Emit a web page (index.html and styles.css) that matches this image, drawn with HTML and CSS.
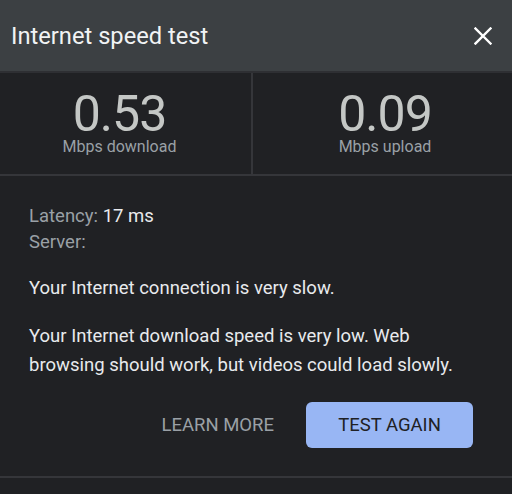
FILE: index.html
```html
<!DOCTYPE html>
<html lang="en">
<head>
<meta charset="utf-8">
<title>Internet speed test</title>
<link rel="stylesheet" href="styles.css">
</head>
<body>
<div class="panel">
  <header class="header">
    <h1 class="title">Internet speed test</h1>
    <button class="close" aria-label="Close">
      <svg width="18" height="18" viewBox="0 0 18 18"><path d="M1.5 1.5 L16.5 16.5 M16.5 1.5 L1.5 16.5" stroke="#ffffff" stroke-width="2.4" stroke-linecap="square" fill="none"/></svg>
    </button>
  </header>
  <section class="stats">
    <div class="stat stat-left">
      <div class="value">0.53</div>
      <div class="unit">Mbps download</div>
    </div>
    <div class="stat stat-right">
      <div class="value">0.09</div>
      <div class="unit">Mbps upload</div>
    </div>
  </section>
  <section class="details">
    <div class="meta">
      <div><span class="label">Latency:</span> <span class="val">17 ms</span></div>
      <div><span class="label">Server:</span></div>
    </div>
    <p class="msg">Your Internet connection is very slow.</p>
    <p class="msg desc">Your Internet download speed is very low. Web browsing should work, but videos could load slowly.</p>
    <div class="actions">
      <button class="btn btn-text">LEARN MORE</button>
      <button class="btn btn-primary">TEST AGAIN</button>
    </div>
  </section>
</div>
</body>
</html>
```
FILE: styles.css
```css
* { box-sizing: border-box; }
html, body { margin: 0; padding: 0; background: #202124; }
body { font-family: Roboto, "Noto Sans", sans-serif; color: #e8eaed; }
.panel { width: 512px; }
.header {
  height: 71px;
  background: #3c4043;
  display: flex;
  align-items: center;
  justify-content: space-between;
  padding: 0 20px 0 11px;
}
.title { margin: 0; font-size: 23.7px; font-weight: 400; color: #f1f3f4; }
.close { background: none; border: 0; padding: 0; width: 18px; height: 18px; display: flex; margin-top: 1px; }
.stats {
  display: grid;
  grid-template-columns: 253px 1fr;
  border-top: 2px solid #2e2f33;
  border-bottom: 2px solid #35363a;
  height: 105px;
}
.stat { display: flex; flex-direction: column; align-items: center; padding-top: 21px; }
.stat-left { border-right: 2px solid #35363a; padding-right: 12px; }
.stat-right { padding-left: 5px; }
.value { font-size: 50px; line-height: 40px; color: #c4c7c5; letter-spacing: -1px; }
.unit { font-size: 16px; line-height: 18px; color: #9aa0a6; margin-top: 4px; }
.details { padding: 27px 29px 0 29px; border-bottom: 2px solid #35363a; height: 302px; }
.meta { font-size: 18.5px; line-height: 26px; }
.label { color: #9aa0a6; }
.val { color: #e8eaed; }
.msg { margin: 19px 0 0 0; font-size: 18.5px; line-height: 29px; color: #e8eaed; }
.actions { display: flex; justify-content: flex-end; gap: 16px; margin-top: 22px; margin-right: 10px; }
.btn { font-family: Roboto, sans-serif; font-size: 18.5px; border: 0; cursor: pointer; }
.btn-text { background: none; color: #9aa0a6; padding: 0 16px; height: 46px; }
.btn-primary { background: #98b6f4; color: #202124; height: 46px; width: 167px; border-radius: 6px; }
```
